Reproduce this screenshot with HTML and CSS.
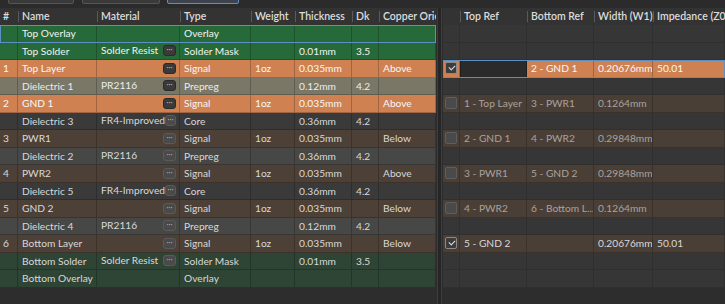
FILE: index.html
```html
<!DOCTYPE html>
<html lang="en">
<head>
  <meta charset="UTF-8">
  <title>Layer Stack Manager</title>
  <link rel="stylesheet" href="styles.css">
</head>
<body>

<!-- Toolbar strip -->
<div class="toolStrip">
  <div class="toolBtn b1"></div>
  <div class="toolBtn b2"></div>
  <div class="toolBtn b3"></div>
</div>

<div class="stackWrap">

  <!-- Stack table -->
  <div class="stackPanel">
    <div class="row head">
      <div class="cell">#</div>
      <div class="cell">Name</div>
      <div class="cell">Material</div>
      <div class="cell">Type</div>
      <div class="cell">Weight</div>
      <div class="cell">Thickness</div>
      <div class="cell">Dk</div>
      <div class="cell clip">Copper Orientation</div>
    </div>

    <div class="row green selected">
      <div class="cell"></div><div class="cell">Top Overlay</div><div class="cell"></div>
      <div class="cell">Overlay</div><div class="cell"></div><div class="cell"></div><div class="cell"></div><div class="cell"></div>
    </div>
    <div class="row green">
      <div class="cell"></div><div class="cell">Top Solder</div><div class="cell mat">Solder Resist<span class="dots">···</span></div>
      <div class="cell">Solder Mask</div><div class="cell"></div><div class="cell">0.01mm</div><div class="cell">3.5</div><div class="cell"></div>
    </div>
    <div class="row orange">
      <div class="cell">1</div><div class="cell">Top Layer</div><div class="cell mat"><span class="dots">···</span></div>
      <div class="cell">Signal</div><div class="cell">1oz</div><div class="cell">0.035mm</div><div class="cell"></div><div class="cell">Above</div>
    </div>
    <div class="row olive">
      <div class="cell"></div><div class="cell">Dielectric 1</div><div class="cell mat">PR2116<span class="dots">···</span></div>
      <div class="cell">Prepreg</div><div class="cell"></div><div class="cell">0.12mm</div><div class="cell">4.2</div><div class="cell"></div>
    </div>
    <div class="row orange">
      <div class="cell">2</div><div class="cell">GND 1</div><div class="cell mat"><span class="dots">···</span></div>
      <div class="cell">Signal</div><div class="cell">1oz</div><div class="cell">0.035mm</div><div class="cell"></div><div class="cell">Above</div>
    </div>
    <div class="row core">
      <div class="cell"></div><div class="cell">Dielectric 3</div><div class="cell mat">FR4-Improved<span class="dots">···</span></div>
      <div class="cell">Core</div><div class="cell"></div><div class="cell">0.36mm</div><div class="cell">4.2</div><div class="cell"></div>
    </div>
    <div class="row brown">
      <div class="cell">3</div><div class="cell">PWR1</div><div class="cell mat"><span class="dots">···</span></div>
      <div class="cell">Signal</div><div class="cell">1oz</div><div class="cell">0.035mm</div><div class="cell"></div><div class="cell">Below</div>
    </div>
    <div class="row prepreg">
      <div class="cell"></div><div class="cell">Dielectric 2</div><div class="cell mat">PR2116<span class="dots">···</span></div>
      <div class="cell">Prepreg</div><div class="cell"></div><div class="cell">0.36mm</div><div class="cell">4.2</div><div class="cell"></div>
    </div>
    <div class="row brown">
      <div class="cell">4</div><div class="cell">PWR2</div><div class="cell mat"><span class="dots">···</span></div>
      <div class="cell">Signal</div><div class="cell">1oz</div><div class="cell">0.035mm</div><div class="cell"></div><div class="cell">Above</div>
    </div>
    <div class="row core">
      <div class="cell"></div><div class="cell">Dielectric 5</div><div class="cell mat">FR4-Improved<span class="dots">···</span></div>
      <div class="cell">Core</div><div class="cell"></div><div class="cell">0.36mm</div><div class="cell">4.2</div><div class="cell"></div>
    </div>
    <div class="row brown">
      <div class="cell">5</div><div class="cell">GND 2</div><div class="cell mat"><span class="dots">···</span></div>
      <div class="cell">Signal</div><div class="cell">1oz</div><div class="cell">0.035mm</div><div class="cell"></div><div class="cell">Below</div>
    </div>
    <div class="row prepreg">
      <div class="cell"></div><div class="cell">Dielectric 4</div><div class="cell mat">PR2116<span class="dots">···</span></div>
      <div class="cell">Prepreg</div><div class="cell"></div><div class="cell">0.12mm</div><div class="cell">4.2</div><div class="cell"></div>
    </div>
    <div class="row brown">
      <div class="cell">6</div><div class="cell">Bottom Layer</div><div class="cell mat"><span class="dots">···</span></div>
      <div class="cell">Signal</div><div class="cell">1oz</div><div class="cell">0.035mm</div><div class="cell"></div><div class="cell">Below</div>
    </div>
    <div class="row dgreen">
      <div class="cell"></div><div class="cell">Bottom Solder</div><div class="cell mat">Solder Resist<span class="dots">···</span></div>
      <div class="cell">Solder Mask</div><div class="cell"></div><div class="cell">0.01mm</div><div class="cell">3.5</div><div class="cell"></div>
    </div>
    <div class="row dgreen">
      <div class="cell"></div><div class="cell">Bottom Overlay</div><div class="cell"></div>
      <div class="cell">Overlay</div><div class="cell"></div><div class="cell"></div><div class="cell"></div><div class="cell"></div>
    </div>
  </div>

  <div class="splitter"></div>

  <!-- Impedance table -->
  <div class="impPanel">
    <div class="row head">
      <div class="cell"></div>
      <div class="cell">Top Ref</div>
      <div class="cell">Bottom Ref</div>
      <div class="cell">Width (W1)</div>
      <div class="cell clip">Impedance (Z0)</div>
    </div>

    <div class="row empty"><div class="cell"></div><div class="cell"></div><div class="cell"></div><div class="cell"></div><div class="cell"></div></div>
    <div class="row empty"><div class="cell"></div><div class="cell"></div><div class="cell"></div><div class="cell"></div><div class="cell"></div></div>
    <div class="row orange selected">
      <div class="cell"><span class="check on"></span></div><div class="cell editor"></div>
      <div class="cell">2 - GND 1</div><div class="cell">0.20676mm</div><div class="cell">50.01</div>
    </div>
    <div class="row empty"><div class="cell"></div><div class="cell"></div><div class="cell"></div><div class="cell"></div><div class="cell"></div></div>
    <div class="row brown off">
      <div class="cell"><span class="check"></span></div><div class="cell">1 - Top Layer</div>
      <div class="cell">3 - PWR1</div><div class="cell">0.1264mm</div><div class="cell"></div>
    </div>
    <div class="row empty"><div class="cell"></div><div class="cell"></div><div class="cell"></div><div class="cell"></div><div class="cell"></div></div>
    <div class="row brown off">
      <div class="cell"><span class="check"></span></div><div class="cell">2 - GND 1</div>
      <div class="cell">4 - PWR2</div><div class="cell">0.29848mm</div><div class="cell"></div>
    </div>
    <div class="row empty"><div class="cell"></div><div class="cell"></div><div class="cell"></div><div class="cell"></div><div class="cell"></div></div>
    <div class="row brown off">
      <div class="cell"><span class="check"></span></div><div class="cell">3 - PWR1</div>
      <div class="cell">5 - GND 2</div><div class="cell">0.29848mm</div><div class="cell"></div>
    </div>
    <div class="row empty"><div class="cell"></div><div class="cell"></div><div class="cell"></div><div class="cell"></div><div class="cell"></div></div>
    <div class="row brown off">
      <div class="cell"><span class="check"></span></div><div class="cell">4 - PWR2</div>
      <div class="cell">6 - Bottom L...</div><div class="cell">0.1264mm</div><div class="cell"></div>
    </div>
    <div class="row empty"><div class="cell"></div><div class="cell"></div><div class="cell"></div><div class="cell"></div><div class="cell"></div></div>
    <div class="row brown">
      <div class="cell"><span class="check on"></span></div><div class="cell">5 - GND 2</div>
      <div class="cell"></div><div class="cell">0.20676mm</div><div class="cell">50.01</div>
    </div>
    <div class="row empty"><div class="cell"></div><div class="cell"></div><div class="cell"></div><div class="cell"></div><div class="cell"></div></div>
    <div class="row empty"><div class="cell"></div><div class="cell"></div><div class="cell"></div><div class="cell"></div><div class="cell"></div></div>
  </div>

</div>

</body>
</html>
```

FILE: styles.css
```css
body {
  margin: 0;
  background: #2d2d2d;
  font-family: Lato, "Noto Sans", sans-serif;
  font-size: 10.2px;
  color: #d8d8d8;
  overflow: hidden;
}

.toolStrip {
  height: 8px;
  position: relative;
  background: #2b2b2b;
  overflow: hidden;
}

.toolBtn {
  position: absolute;
  top: -10px;
  height: 12px;
  background: #3a3a3a;
  border: 1px solid #555;
  border-radius: 2px;
}
.b1 { left: 8px; width: 64px; }
.b2 { left: 82px; width: 76px; }
.b3 { left: 167px; width: 70px; border-color: #5d8fc6; background: #3d4450; }

.stackWrap {
  display: flex;
  height: 296px;
}

.stackPanel { width: 436px; }
.impPanel { flex: 1; }

.splitter {
  width: 3px;
  margin: 0 1px;
  background: #262626;
  border-left: 1px solid #3d3d3d;
  border-right: 1px solid #3d3d3d;
}

.row {
  display: grid;
  height: 17.53px;
  box-sizing: border-box;
}

.stackPanel .row { grid-template-columns: 18px 79px 83px 71px 44px 57px 27px 57px; }
.impPanel .row { grid-template-columns: 17px 67px 67px 59px 1fr; }

.cell {
  padding: 0 4px;
  line-height: 17px;
  white-space: nowrap;
  overflow: hidden;
  border-right: 1px solid rgba(0, 0, 0, 0.22);
  border-bottom: 1px solid rgba(0, 0, 0, 0.22);
}
.stackPanel .cell:first-child { padding-left: 3px; }
.clip { text-overflow: clip; }

.row.head {
  height: 17px;
  background: #333;
  color: #dcdcdc;
  font-weight: 600;
  font-size: 10.5px;
}
.head .cell {
  border-bottom: none;
  border-right: none;
  line-height: 16px;
  position: relative;
}
.head .cell + .cell::before {
  content: "";
  position: absolute;
  left: 0;
  top: 3px;
  bottom: 3px;
  border-left: 1px solid #5a5a5a;
}
.impPanel .head .cell:last-child { padding-right: 0; }

.green { background: #266a3a; color: #f2f2f2; }
.orange { background: #cf8152; color: #f7f7f7; }
.olive { background: #7a7767; color: #ececec; }
.core { background: #3a3a3a; }
.prepreg { background: #474745; }
.brown { background: #4d4037; }
.dgreen { background: #2e4536; }

.selected { outline: 1px solid #5c8fc4; outline-offset: -1px; }

.mat {
  display: flex;
  align-items: center;
  padding-right: 3px;
}
.dots {
  margin-left: auto;
  width: 11px;
  height: 9px;
  line-height: 7px;
  font-size: 8px;
  text-align: center;
  color: #aaa;
  background: #4a4a4a;
  border: 1px solid #5a5a5a;
  border-radius: 3px;
}
.green .dots, .orange .dots, .olive .dots {
  background: #3a3a3a;
  border-color: #2a2a2a;
  color: #bbb;
}

.empty { background: #363636; }
.empty .cell { border-color: rgba(0, 0, 0, 0.12); }
.off { color: #a9a29c; }
.impPanel .brown { background: #4a3f37; }

.impPanel .cell:first-child {
  padding: 0;
  display: flex;
  align-items: center;
  justify-content: center;
}

.check {
  width: 12px;
  height: 12px;
  box-sizing: border-box;
  border: 1px solid #5e5e5e;
  border-radius: 2px;
  background: #4a4a4a;
  position: relative;
}
.check.on {
  background: #3c3c3c;
  border-color: #8a8a8a;
}
.check.on::after {
  content: "";
  position: absolute;
  left: 3px;
  top: 2px;
  width: 5px;
  height: 3px;
  border-left: 1px solid #e0e0e0;
  border-bottom: 1px solid #e0e0e0;
  transform: rotate(-45deg);
}

.editor {
  background: #2b2b2b;
  border: 1px solid #1e1e1e;
}
```
